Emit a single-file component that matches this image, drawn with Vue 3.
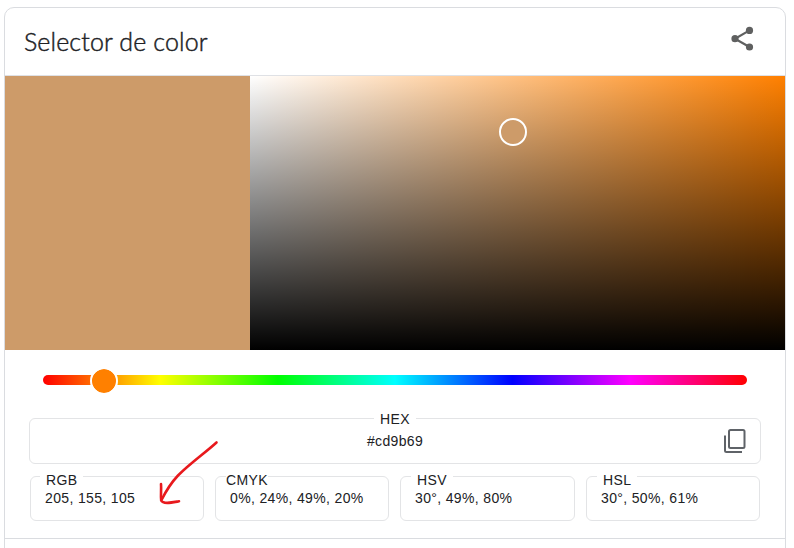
<script setup>
const hex = '#cd9b69'
const formats = [
  { name: 'RGB', value: '205, 155, 105' },
  { name: 'CMYK', value: '0%, 24%, 49%, 20%' },
  { name: 'HSV', value: '30°, 49%, 80%' },
  { name: 'HSL', value: '30°, 50%, 61%' },
]
</script>

<template>
  <main class="page">
    <section class="card">
      <header class="header">
        <h1 class="title">Selector de color</h1>
        <svg class="share" viewBox="0 0 28 28" width="28" height="28" fill="#5f6060">
          <path d="M21.500 5.400L7 13.700L21.500 22" fill="none" stroke="#5f6060" stroke-width="2.200" />
          <circle cx="21.500" cy="5.400" r="3.600" />
          <circle cx="7" cy="13.700" r="3.600" />
          <circle cx="21.500" cy="22" r="3.600" />
        </svg>
      </header>

      <div class="picker">
        <div class="swatch"></div>
        <div class="field">
          <span class="handle"></span>
        </div>
      </div>

      <div class="hue">
        <span class="thumb"></span>
      </div>

      <div class="values">
        <div class="box hex">
          <span class="label">HEX</span>
          <span class="value">{{ hex }}</span>
          <svg class="copy" viewBox="0 0 24 26" width="24" height="26" fill="none" stroke="#5f6368" stroke-width="2">
            <rect x="6" y="2" width="15.5" height="18" rx="1.5" />
            <path d="M2 7.5V22.5q0 1.500 1.500 1.500H19" />
          </svg>
        </div>
        <div class="row">
          <div v-for="f in formats" :key="f.name" class="box" :class="f.name.toLowerCase()">
            <span class="label">{{ f.name }}</span>
            <span class="value">{{ f.value }}</span>
          </div>
        </div>
      </div>

      <div class="footer"></div>
    </section>

    <svg class="arrow" viewBox="0 0 64 70" width="64" height="70" fill="none" stroke="#e8191d" stroke-width="2.6" stroke-linecap="round" stroke-linejoin="round">
      <path d="M60.5 6.500C49 17 35 26.500 22 39.500C14 48 9 57 5.500 64" />
      <path d="M5 48C5.500 54 4.500 60 5.200 64.500C7 68.500 16 66.500 23 65.300" />
    </svg>
  </main>
</template>

<style>
body {
  margin: 0;
  background: #fff;
}
</style>

<style scoped>
.page {
  position: relative;
  box-sizing: border-box;
  width: 794px;
  height: 548px;
  padding: 7px 8px 0 4px;
  overflow: hidden;
  background: #fff;
  color: #202124;
  font-family: "Liberation Sans", Arial, sans-serif;
}
.card {
  box-sizing: border-box;
  height: 560px;
  border: 1px solid #dadce0;
  border-radius: 10px;
  overflow: hidden;
}
.header {
  box-sizing: border-box;
  display: flex;
  justify-content: space-between;
  height: 68px;
  padding: 17px 29px 0 19px;
  border-bottom: 1px solid #dfe1e5;
}
.title {
  margin: 0;
  font: 300 25px/32px Lato, sans-serif;
  letter-spacing: 0.12px;
  -webkit-text-stroke: 0.45px #202124;
  white-space: nowrap;
}
.picker {
  display: flex;
  height: 274px;
}
.swatch {
  width: 245px;
  background: #cd9b69;
}
.field {
  position: relative;
  flex: 1;
  background:
    linear-gradient(to top, #000, transparent),
    linear-gradient(to right, #fff, #ff8000);
}
.handle {
  position: absolute;
  box-sizing: border-box;
  left: 249px;
  top: 42px;
  width: 28px;
  height: 28px;
  border: 2px solid #fff;
  border-radius: 50%;
  background: #cd9b69;
}
.hue {
  position: relative;
  height: 10px;
  margin: 25px 38px 0;
  border-radius: 5px;
  background: linear-gradient(to right, #f00, #ff0 16.67%, #0f0 33.33%, #0ff 50%, #00f 66.67%, #f0f 83.33%, #f00);
}
.thumb {
  position: absolute;
  box-sizing: border-box;
  left: 47px;
  top: -8px;
  width: 28px;
  height: 28px;
  border: 2px solid #fff;
  border-radius: 50%;
  background: #ff8000;
  background-clip: padding-box;
}
.values {
  padding: 33px 24px 0;
}
.box {
  position: relative;
  box-sizing: border-box;
  height: 45px;
  padding: 12px 0 0 14px;
  border: 1px solid #e3e4e6;
  border-radius: 6px;
}
.label,
.value {
  font-size: 14px;
  line-height: 18px;
  letter-spacing: 0.35px;
  white-space: pre;
}
.value {
  display: block;
}
.label {
  position: absolute;
  left: 9px;
  top: -6px;
  padding: 0 6px;
  background: #fff;
}
.hex {
  height: 46px;
  padding: 13px 0 0;
  text-align: center;
}
.hex .label {
  left: 344px;
  top: -9px;
}
.copy {
  position: absolute;
  left: 693px;
  top: 9px;
}
.row {
  display: grid;
  grid-template-columns: 174px 174px 175px 174px;
  gap: 11px;
  padding: 12px 1px 0;
}
.cmyk .label {
  left: 10px;
  padding: 0;
}
.hsv .label,
.hsl .label {
  left: 10px;
}
.footer {
  margin-top: 17px;
  border-top: 1px solid #dadce0;
}
.arrow {
  position: absolute;
  left: 156px;
  top: 436px;
}
</style>
